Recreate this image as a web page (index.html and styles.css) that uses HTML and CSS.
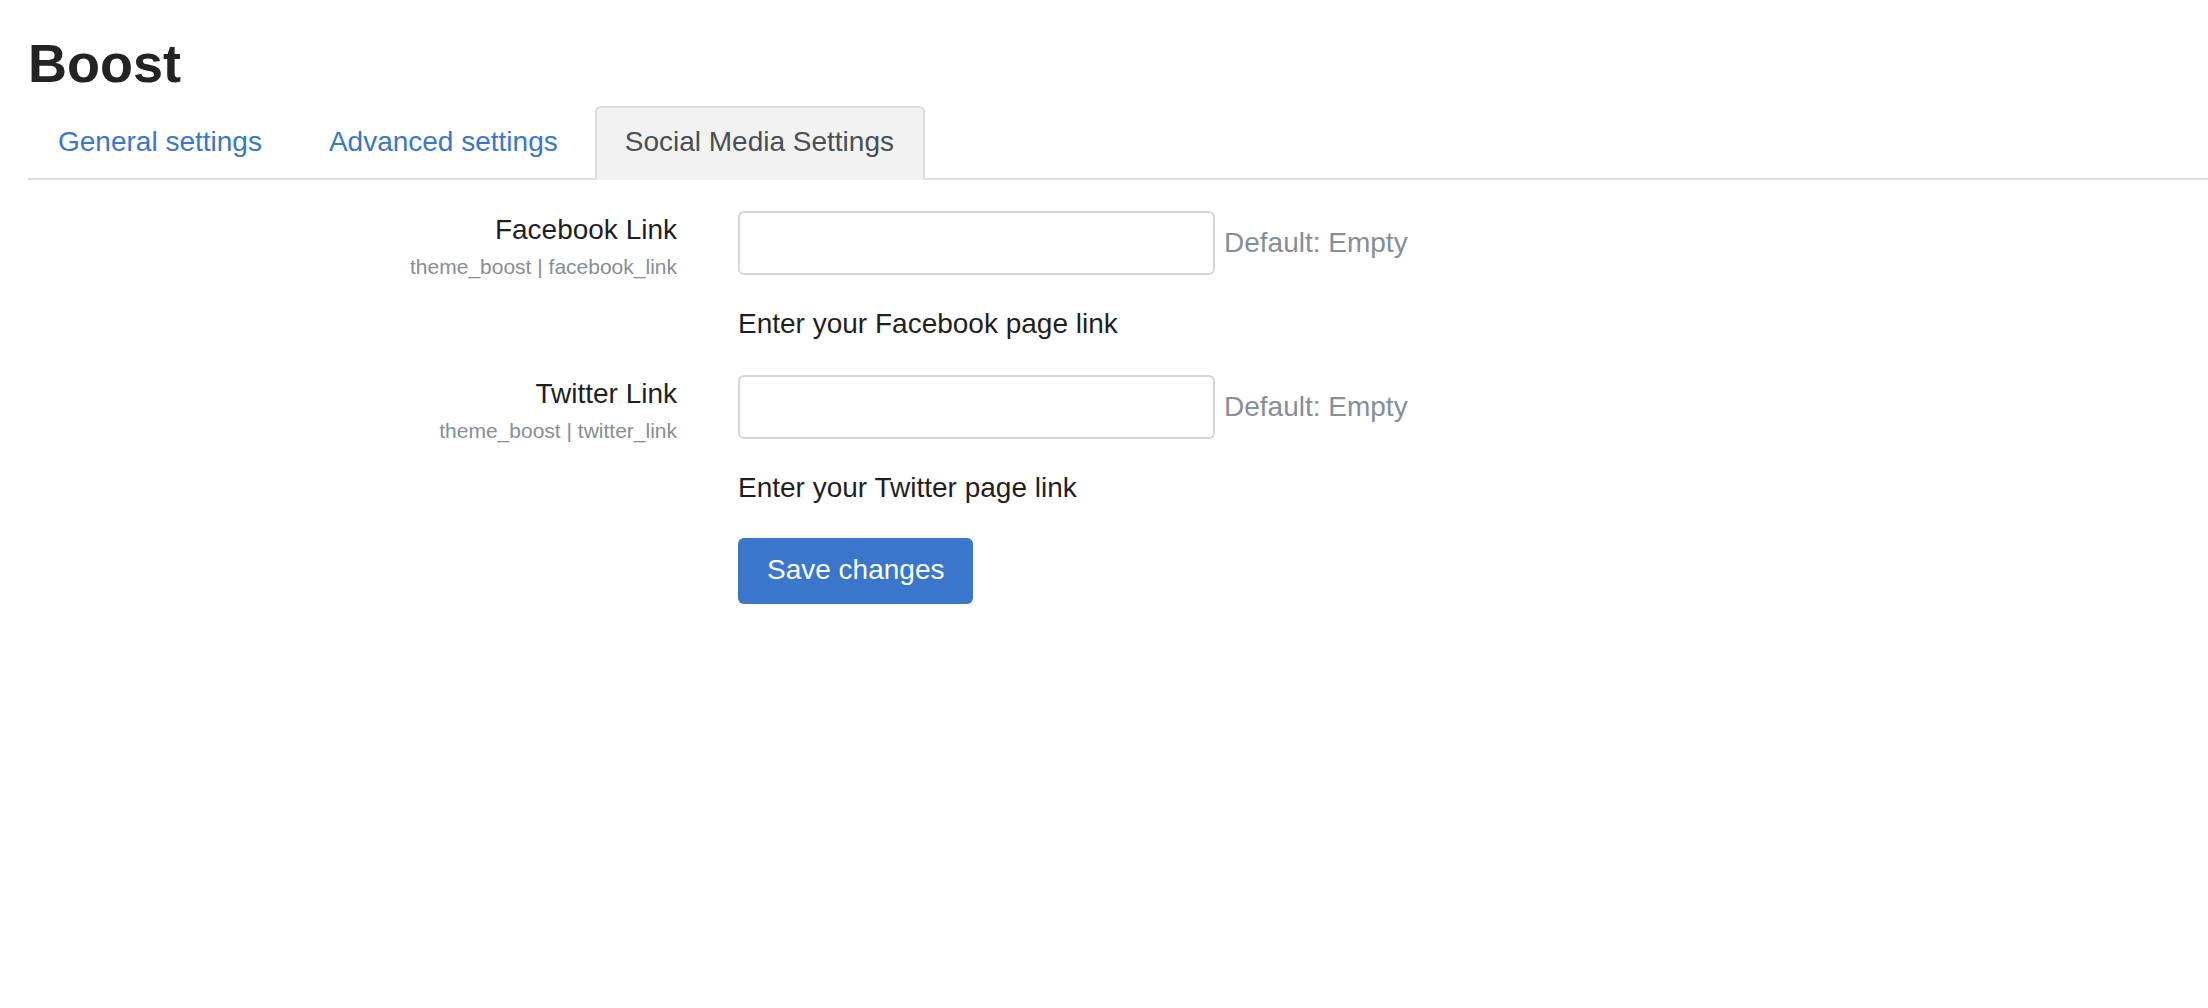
FILE: index.html
```html
<!DOCTYPE html>
<html lang="en">
<head>
<meta charset="utf-8">
<title>Boost</title>
<link rel="stylesheet" href="styles.css">
</head>
<body>
<div class="page">
  <h1 class="page-title">Boost</h1>
  <ul class="tabs">
    <li class="tab-item"><a class="tab-link" href="#">General settings</a></li>
    <li class="tab-item"><a class="tab-link" href="#">Advanced settings</a></li>
    <li class="tab-item"><a class="tab-link active" href="#">Social Media Settings</a></li>
  </ul>
  <form class="settings">
    <div class="setting">
      <div class="setting-label">
        <label class="label-main">Facebook Link</label>
        <div class="label-sub">theme_boost | facebook_link</div>
      </div>
      <div class="setting-field">
        <div class="field-line">
          <input class="text-input" type="text">
          <span class="default">Default: Empty</span>
        </div>
        <div class="description">Enter your Facebook page link</div>
      </div>
    </div>
    <div class="setting">
      <div class="setting-label">
        <label class="label-main">Twitter Link</label>
        <div class="label-sub">theme_boost | twitter_link</div>
      </div>
      <div class="setting-field">
        <div class="field-line">
          <input class="text-input" type="text">
          <span class="default">Default: Empty</span>
        </div>
        <div class="description">Enter your Twitter page link</div>
      </div>
    </div>
    <div class="actions">
      <button class="btn-primary" type="button">Save changes</button>
    </div>
  </form>
</div>
</body>
</html>
```
FILE: styles.css
```css
html, body {
  margin: 0;
  padding: 0;
  background: #ffffff;
}

body {
  font-family: "Liberation Sans", Arial, sans-serif;
  color: #222222;
}

.page {
  padding-left: 28px;
}

.page-title {
  margin: 31px 0 10px 0;
  font-size: 54px;
  line-height: 1.2;
  font-weight: 700;
  color: #232323;
}

.tabs {
  list-style: none;
  margin: 0;
  padding: 0;
  display: flex;
  gap: 7px;
  border-bottom: 2px solid #dddddd;
}

.tab-item {
  margin-bottom: -2px;
}

.tab-link {
  display: block;
  padding: 13px 28px 15px 28px;
  border: 2px solid transparent;
  border-radius: 6px 6px 0 0;
  font-size: 28px;
  line-height: 42px;
  color: #3a76cc;
  text-decoration: none;
}

.tab-link.active {
  padding-right: 29px;
  color: #4a4f55;
  background: #f2f2f2;
  border-color: #dddddd #dddddd #f2f2f2 #dddddd;
}

.settings {
  margin-top: 29px;
}

.setting {
  display: flex;
  margin-bottom: 28px;
}

.setting-label {
  width: 649px;
  margin-right: 61px;
  text-align: right;
  flex-shrink: 0;
}

.label-main {
  display: block;
  font-size: 28px;
  line-height: 42px;
  color: #1f1f1f;
}

.label-sub {
  font-size: 21px;
  line-height: 31.5px;
  color: #868e96;
}

.setting-field {
  display: flex;
  flex-direction: column;
}

.field-line {
  display: flex;
  align-items: center;
  margin-top: 2px;
}

.text-input {
  box-sizing: border-box;
  width: 477px;
  height: 64px;
  margin: 0;
  border: 2px solid #d6d6d6;
  border-radius: 6px;
  background: #ffffff;
  font-family: inherit;
  font-size: 28px;
  padding: 0 16px;
}

.default {
  margin-left: 9px;
  font-size: 28px;
  line-height: 42px;
  color: #868e96;
}

.description {
  margin-top: 28px;
  font-size: 28px;
  line-height: 42px;
  color: #1f1f1f;
}

.actions {
  padding-left: 710px;
  padding-top: 1px;
}

.btn-primary {
  display: inline-block;
  margin: 0;
  padding: 11px 29px 13px 29px;
  border: none;
  border-radius: 6px;
  background: #3a76cc;
  color: #ffffff;
  font-family: "Liberation Sans", Arial, sans-serif;
  font-size: 28px;
  line-height: 42px;
  cursor: pointer;
}
```
